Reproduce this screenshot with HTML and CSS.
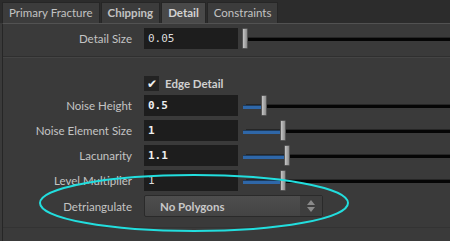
FILE: index.html
```html
<!DOCTYPE html>
<html lang="en">
<head>
    <meta charset="UTF-8">
    <title>Detail</title>
    <link rel="stylesheet" href="styles.css">
</head>
<body>

<div class="tabs">
    <div class="tab">Primary Fracture</div>
    <div class="tab bold">Chipping</div>
    <div class="tab bold active">Detail</div>
    <div class="tab">Constraints</div>
</div>

<div class="panel">
    <div class="row first">
        <label>Detail Size</label>
        <div class="field">0.05</div>
        <div class="slider">
            <div class="track"></div>
            <div class="handle" style="left: 0px"></div>
        </div>
    </div>

    <div class="separator"></div>

    <div class="row toggle-row">
        <label></label>
        <div class="toggle">
            <span class="checkbox">&#10004;</span>
            <span class="toggle-text">Edge Detail</span>
        </div>
    </div>

    <div class="row after-toggle">
        <label>Noise Height</label>
        <div class="field strong">0.5</div>
        <div class="slider">
            <div class="track"></div>
            <div class="fill" style="width: 19px"></div>
            <div class="handle" style="left: 19px"></div>
        </div>
    </div>

    <div class="row">
        <label>Noise Element Size</label>
        <div class="field strong">1</div>
        <div class="slider">
            <div class="track"></div>
            <div class="fill" style="width: 38px"></div>
            <div class="handle" style="left: 38px"></div>
        </div>
    </div>

    <div class="row">
        <label>Lacunarity</label>
        <div class="field strong">1.1</div>
        <div class="slider">
            <div class="track"></div>
            <div class="fill" style="width: 42px"></div>
            <div class="handle" style="left: 42px"></div>
        </div>
    </div>

    <div class="row">
        <label>Level Multiplier</label>
        <div class="field">1</div>
        <div class="slider">
            <div class="track"></div>
            <div class="fill" style="width: 38px"></div>
            <div class="handle" style="left: 38px"></div>
        </div>
    </div>

    <div class="row">
        <label>Detriangulate</label>
        <div class="dropdown">
            <span class="dropdown-text">No Polygons</span>
            <span class="arrows">
                <svg width="10" height="14" viewBox="0 0 10 14">
                    <path d="M5 1 L9 6 L1 6 Z" fill="#8a8a8a"/>
                    <path d="M5 13 L9 8 L1 8 Z" fill="#8a8a8a"/>
                </svg>
            </span>
        </div>
    </div>

    <div class="bottom-line"></div>
</div>

<svg class="highlight" width="450" height="241" viewBox="0 0 450 241">
    <ellipse cx="194" cy="203" rx="154" ry="28" fill="none" stroke="#22dede" stroke-width="2"/>
</svg>

</body>
</html>
```

FILE: styles.css
```css
body {
    margin: 0;
    width: 450px;
    height: 241px;
    overflow: hidden;
    background-color: #3a3a3a;
    font-family: "Lato", "Open Sans", sans-serif;
    font-size: 11px;
    color: #c4c4c4;
    position: relative;
}

/* Tabs */
.tabs {
    display: flex;
    height: 21px;
    padding: 2px 0 0 2px;
    gap: 1px;
    background-color: #2c2c2c;
}
.tab {
    padding: 0 6px;
    line-height: 20px;
    font-size: 11.5px;
    background-color: #3c3c3c;
    border: 1px solid #262626;
    border-bottom: none;
    color: #c2c2c2;
}
.tab.bold {
    font-weight: bold;
}
.tab.active {
    background-color: #494949;
    color: #d2d2d2;
}

/* Panel */
.panel {
    margin-left: 2px;
    border-top: 1px solid #525252;
    border-left: 1px solid #262626;
    height: 220px;
}
.row {
    display: grid;
    grid-template-columns: 141px 94px 1fr;
    align-items: center;
    height: 21px;
    margin-top: 4px;
}
.row label {
    text-align: right;
    padding-right: 12px;
    font-size: 11.5px;
    white-space: nowrap;
}
.field {
    height: 21px;
    line-height: 21px;
    background-color: #1d1d1d;
    font-family: "DejaVu Sans Mono", monospace;
    font-size: 11px;
    color: #dcdcdc;
    padding-left: 4px;
}
.field.strong {
    font-weight: bold;
    color: #efefef;
}

/* Slider */
.slider {
    position: relative;
    height: 21px;
    margin-left: 4px;
}
.track {
    position: absolute;
    left: 4px;
    right: 0;
    top: 9px;
    height: 3px;
    background-color: #050505;
    border-top: 1px solid #262626;
}
.fill {
    position: absolute;
    left: 1px;
    top: 10px;
    height: 3px;
    background-color: #2f67a8;
    border-top: 1px solid #1c3a5c;
}
.handle {
    position: absolute;
    top: 0;
    width: 4px;
    height: 19px;
    background: linear-gradient(to right, #c6c6c6, #8c8c8c);
    border: 1px solid #555;
    border-radius: 1px;
}

.separator {
    margin-top: 7px;
    border-top: 1px solid #2f2f2f;
    border-bottom: 1px solid #444;
}

.toggle-row {
    margin-top: 17px;
    height: 17px;
}
.row.after-toggle {
    margin-top: 3px;
}
.toggle {
    display: flex;
    align-items: center;
    gap: 6px;
    grid-column: 2 / 4;
}
.checkbox {
    width: 15px;
    height: 15px;
    background-color: #232323;
    color: #f0f0f0;
    font-size: 12px;
    line-height: 15px;
    text-align: center;
}
.toggle-text {
    font-weight: bold;
    font-size: 11.5px;
    color: #d0d0d0;
}

/* Dropdown */
.dropdown {
    grid-column: 2 / 4;
    width: 177px;
    height: 20px;
    display: flex;
    align-items: center;
    justify-content: space-between;
    background: linear-gradient(#4e4e4e, #444);
    border: 1px solid #2a2a2a;
    border-radius: 2px;
}
.dropdown-text {
    padding-left: 15px;
    font-weight: bold;
    font-size: 11.5px;
    color: #c8c8c8;
}
.arrows {
    width: 22px;
    height: 20px;
    display: flex;
    align-items: center;
    justify-content: center;
    background-color: #3e3e3e;
}

.bottom-line {
    margin-top: 11px;
    border-top: 1px solid #333;
}

.highlight {
    position: absolute;
    left: 0;
    top: 0;
    pointer-events: none;
}
```
